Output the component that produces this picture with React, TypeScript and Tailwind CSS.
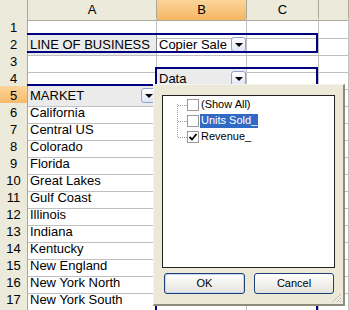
import React from 'react';

const markets = [
    'California',
    'Central US',
    'Colorado',
    'Florida',
    'Great Lakes',
    'Gulf Coast',
    'Illinois',
    'Indiana',
    'Kentucky',
    'New England',
    'New York North',
    'New York South',
];

interface Row {
    n: number;
    a?: string;
    b?: string;
    aField?: boolean;
    bField?: boolean;
    hideNum?: boolean;
}

const rows: Row[] = [
    { n: 1 },
    { n: 2, a: 'LINE OF BUSINESS', aField: true, b: 'Copier Sale' },
    { n: 3 },
    { n: 4, b: 'Data', bField: true },
    { n: 5, a: 'MARKET', aField: true },
    ...markets.map((m, i) => ({ n: i + 6, a: m })),
    { n: 18, hideNum: true },
];

function DropButton() {
    return (
        <div className="w-[15px] h-[15px] rounded-[3px] border border-[#8ea3c9] bg-gradient-to-b from-white to-[#dfe6f3] flex items-center justify-center shrink-0">
            <div className="w-0 h-0 border-l-[4px] border-r-[4px] border-t-[4px] border-l-transparent border-r-transparent border-t-black" />
        </div>
    );
}

function Checkbox({ checked }: { checked?: boolean }) {
    return (
        <div className="w-[12px] h-[12px] border border-[#9a9a9a] bg-white flex items-center justify-center shrink-0">
            {checked && (
                <svg width="10" height="10" viewBox="0 0 10 10">
                    <path d="M1.5 5 L4 7.5 L8.5 2" stroke="#000" strokeWidth="1.8" fill="none" />
                </svg>
            )}
        </div>
    );
}

function FieldPopup() {
    return (
        <div className="absolute left-[153px] top-[84px] w-[192px] h-[222px] bg-[#ece9d8] border-t border-l border-t-[#f4f3ee] border-l-[#f4f3ee] border-r-2 border-b-2 border-r-[#8e8b7c] border-b-[#8e8b7c] z-20">
            {/* list box */}
            <div className="absolute left-[8px] top-[10px] w-[173px] h-[173px] bg-white border border-[#222] font-['Liberation_Sans',Arial,sans-serif] text-[11px]">
                <div className="relative pt-[1px]">
                    {/* tree dots */}
                    <div className="absolute left-[14px] top-[8px] h-[33px] border-l border-dotted border-[#a0a0a0]" />
                    {[
                        { label: '(Show All)' },
                        { label: 'Units Sold_', selected: true },
                        { label: 'Revenue_', checked: true },
                    ].map((item) => (
                        <div key={item.label} className="h-[16px] flex items-center">
                            <div className="w-[9px] ml-[15px] border-t border-dotted border-[#a0a0a0]" />
                            <Checkbox checked={item.checked} />
                            <span
                                className={
                                    item.selected
                                        ? 'ml-[1px] px-[1px] h-[14px] leading-[13px] bg-[#316ac5] text-white'
                                        : 'ml-[1px] px-[1px] h-[14px] leading-[13px] text-black'
                                }
                            >
                                {item.label}
                            </span>
                        </div>
                    ))}
                </div>
            </div>

            {/* buttons */}
            <div className="absolute left-[10px] top-[188px] flex gap-[9px] font-['Liberation_Sans',Arial,sans-serif] text-[11px]">
                <button className="w-[81px] h-[21px] rounded-[3px] border border-[#1c3f7a] bg-gradient-to-b from-white to-[#e4e3dc] shadow-[inset_0_0_0_1px_#c6d6f3] text-black">
                    OK
                </button>
                <button className="w-[80px] h-[21px] rounded-[3px] border border-[#1c3f7a] bg-gradient-to-b from-white to-[#e4e3dc] text-black">
                    Cancel
                </button>
            </div>

            {/* size grip */}
            <svg className="absolute right-[1px] bottom-[1px]" width="12" height="12" viewBox="0 0 12 12">
                <path d="M11 3 L3 11 M11 7 L7 11 M11 10 L10 11" stroke="#b8b4a2" strokeWidth="1" />
                <path d="M11 4 L4 11 M11 8 L8 11" stroke="#fff" strokeWidth="1" />
            </svg>
        </div>
    );
}

export default function App() {
    const gridCell = 'border-r border-b border-[#c0c0c0]';
    const hdr = 'border-r border-b border-[#aca899] flex items-center justify-center';

    return (
        <div className="relative w-[349px] h-[310px] overflow-hidden bg-white text-black text-[13px] font-['Liberation_Sans',Arial,sans-serif]">
            {/* column headers */}
            <div className="grid grid-cols-[28px_129px_90px_72px_1fr] h-[18px]">
                <div className={`${hdr} bg-[#ebeadb]`} />
                <div className={`${hdr} bg-[#ebeadb]`}>A</div>
                <div className={`${hdr} bg-gradient-to-b from-[#fbd499] to-[#f6b660]`}>B</div>
                <div className={`${hdr} bg-[#ebeadb]`}>C</div>
                <div className={`${hdr} bg-[#ebeadb]`} />
            </div>

            {rows.map((r) => (
                <div key={r.n} className="grid grid-cols-[28px_129px_90px_72px_1fr] h-[17px]">
                    <div
                        className={`${hdr} ${
                            r.n === 5 ? 'bg-gradient-to-b from-[#fbd499] to-[#f6b660]' : 'bg-[#ebeadb]'
                        }`}
                    >
                        {r.hideNum ? '' : r.n}
                    </div>
                    <div
                        className={`${gridCell} flex items-center pl-[2px] whitespace-nowrap ${
                            r.aField ? 'bg-[#ebebeb] border-r-[#8a8a8a]' : ''
                        } ${r.n === 17 ? 'border-b-[#404040]' : ''}`}
                    >
                        <span className="flex-1">{r.a}</span>
                        {r.n === 5 && <DropButton />}
                    </div>
                    <div
                        className={`${gridCell} flex items-center pl-[2px] whitespace-nowrap ${
                            r.bField ? 'bg-[#ebebeb]' : ''
                        }`}
                    >
                        <span className="flex-1">{r.b}</span>
                        {(r.n === 2 || r.n === 4) && <DropButton />}
                    </div>
                    <div className={gridCell} />
                    <div className={gridCell} />
                </div>
            ))}

            {/* pivot range borders */}
            <div className="absolute left-[27px] top-[33px] w-[291px] h-[20px] border-t-2 border-b-2 border-r-2 border-[#000080] pointer-events-none z-10" />
            <div className="absolute left-[155px] top-[67px] w-[163px] h-[260px] border-t-2 border-l-2 border-r-2 border-[#000080] pointer-events-none z-10" />
            <div className="absolute left-[27px] top-[84px] w-[130px] h-[2px] bg-[#000080] pointer-events-none z-10" />

            <FieldPopup />
        </div>
    );
}
